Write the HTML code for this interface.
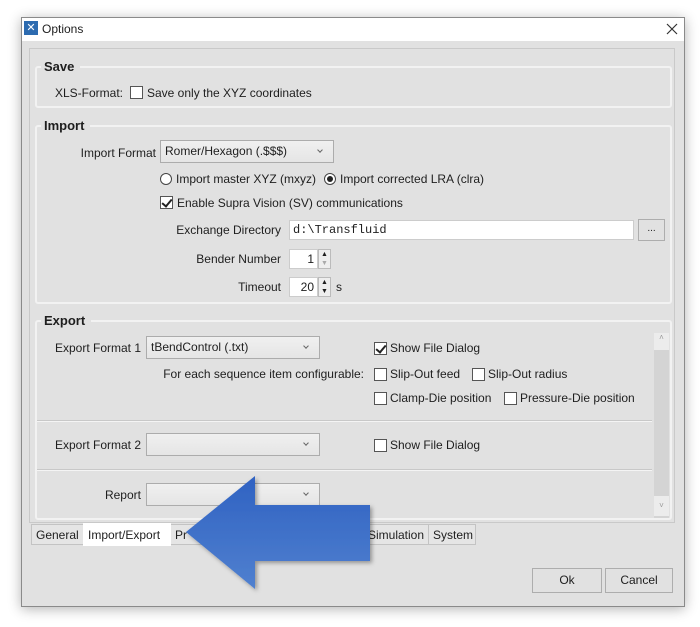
<!DOCTYPE html>
<html><head><meta charset="utf-8"><style>
*{box-sizing:border-box}
body{margin:0;width:700px;height:627px;background:#fff;position:relative;overflow:hidden;font-family:"Liberation Sans",sans-serif;font-size:12px;color:#1e1e1e}
.a{position:absolute;white-space:nowrap}
.dlg{position:absolute;left:21px;top:17px;width:664px;height:590px;background:#e1e1e1;border:1px solid #8a8a8a;box-shadow:0 2px 12px rgba(0,0,0,.3)}
.grp{position:absolute;border:2px solid #f2f2f2;border-radius:3px}
.gt{position:absolute;font-weight:bold;font-size:13px;background:#e1e1e1;padding:0 6px 0 3px}
.cb{position:absolute;width:13px;height:13px;border:1px solid #555;background:#fff}
.cb.c::after{content:"";position:absolute;left:3px;top:0px;width:4px;height:8px;border:solid #222;border-width:0 2px 2px 0;transform:rotate(40deg)}
.combo{position:absolute;border:1px solid #acacac;background:linear-gradient(#f0f0f0,#e5e5e5);padding:3px 4px;height:23px}
.combo::after{content:"";position:absolute;right:11px;top:7px;width:3px;height:3px;border:solid #666;border-width:0 1px 1px 0;transform:rotate(45deg)}
.rd{position:absolute;width:12px;height:12px;border:1px solid #444;border-radius:50%;background:#fff}
.rd.c::after{content:"";position:absolute;left:2px;top:2px;width:6px;height:6px;border-radius:50%;background:#222}
.tb{position:absolute;background:#fff;border:1px solid #ccc}
.btn{position:absolute;border:1px solid #adadad;background:#e1e1e1;text-align:center}
.tab{position:absolute;top:524px;height:21px;border:1px solid #c3c3c3;background:#e5e5e5;padding:3px 4px}
.r{text-align:right}
</style></head><body>
<div class="dlg"></div>
<div class="a" style="left:22px;top:18px;width:662px;height:23px;background:#fff"></div>
<div class="a" style="left:24px;top:21px;width:14px;height:14px;background:#2d6bb0;color:#fff;font-size:11px;line-height:14px;text-align:center">✕</div>
<div class="a" style="left:42px;top:22px">Options</div>
<svg class="a" style="left:666px;top:23px" width="12" height="12"><path d="M1 1L11 11M11 1L1 11" stroke="#333" stroke-width="1.2"/></svg>
<div class="a" style="left:29px;top:48px;width:646px;height:475px;border:1px solid #c9c9c9"></div>

<div class="grp" style="left:35px;top:66px;width:637px;height:42px"></div>
<div class="gt" style="left:41px;top:59px">Save</div>
<div class="a" style="left:55px;top:86px">XLS-Format:</div>
<div class="cb" style="left:130px;top:86px"></div>
<div class="a" style="left:147px;top:86px">Save only the XYZ coordinates</div>

<div class="grp" style="left:35px;top:125px;width:637px;height:179px"></div>
<div class="gt" style="left:41px;top:118px">Import</div>
<div class="a r" style="left:60px;width:96px;top:146px">Import Format</div>
<div class="combo" style="left:160px;top:140px;width:174px">Romer/Hexagon (.$$$)</div>
<div class="rd" style="left:160px;top:173px"></div>
<div class="a" style="left:176px;top:172px">Import master XYZ (mxyz)</div>
<div class="rd c" style="left:324px;top:173px"></div>
<div class="a" style="left:340px;top:172px">Import corrected LRA (clra)</div>
<div class="cb c" style="left:160px;top:196px"></div>
<div class="a" style="left:177px;top:196px">Enable Supra Vision (SV) communications</div>
<div class="a r" style="left:150px;width:131px;top:223px">Exchange Directory</div>
<div class="tb" style="left:289px;top:220px;width:345px;height:20px;font-family:'Liberation Mono',monospace;padding:2px 3px">d:\Transfluid</div>
<div class="btn" style="left:638px;top:219px;width:27px;height:22px;font-size:10px;line-height:18px">...</div>
<div class="a r" style="left:150px;width:131px;top:252px">Bender Number</div>
<div class="tb" style="left:289px;top:249px;width:29px;height:20px;text-align:right;padding:2px 3px">1</div>
<div class="a" style="left:318px;top:249px;width:13px;height:20px;border:1px solid #bbb;background:#eee;font-size:7px;line-height:9px;text-align:center">▲<br><span style="color:#aaa">▼</span></div>
<div class="a r" style="left:150px;width:131px;top:280px">Timeout</div>
<div class="tb" style="left:289px;top:277px;width:29px;height:20px;text-align:right;padding:2px 3px">20</div>
<div class="a" style="left:318px;top:277px;width:13px;height:20px;border:1px solid #bbb;background:#eee;font-size:7px;line-height:9px;text-align:center">▲<br>▼</div>
<div class="a" style="left:336px;top:280px">s</div>

<div class="grp" style="left:35px;top:320px;width:637px;height:200px"></div>
<div class="gt" style="left:41px;top:313px">Export</div>
<div class="a" style="left:654px;top:333px;width:15px;height:185px;background:#d4d4d4"></div>
<div class="a" style="left:654px;top:333px;width:15px;height:17px;background:#ececec;font-size:8px;text-align:center;color:#999">˄</div>
<div class="a" style="left:654px;top:496px;width:15px;height:20px;background:#ececec;font-size:8px;text-align:center;color:#999;padding-top:5px">˅</div>
<div class="a r" style="left:40px;width:101px;top:341px">Export Format 1</div>
<div class="combo" style="left:146px;top:336px;width:174px">tBendControl (.txt)</div>
<div class="cb c" style="left:374px;top:342px"></div>
<div class="a" style="left:390px;top:341px">Show File Dialog</div>
<div class="a r" style="left:140px;width:224px;top:367px">For each sequence item configurable:</div>
<div class="cb" style="left:374px;top:368px"></div>
<div class="a" style="left:390px;top:367px">Slip-Out feed</div>
<div class="cb" style="left:472px;top:368px"></div>
<div class="a" style="left:488px;top:367px">Slip-Out radius</div>
<div class="cb" style="left:374px;top:392px"></div>
<div class="a" style="left:390px;top:391px">Clamp-Die position</div>
<div class="cb" style="left:504px;top:392px"></div>
<div class="a" style="left:520px;top:391px">Pressure-Die position</div>
<div class="a" style="left:37px;top:420px;width:615px;height:2px;background:#c8c8c8;border-bottom:1px solid #f4f4f4"></div>
<div class="a r" style="left:40px;width:101px;top:438px">Export Format 2</div>
<div class="combo" style="left:146px;top:433px;width:174px"></div>
<div class="cb" style="left:374px;top:439px"></div>
<div class="a" style="left:390px;top:438px">Show File Dialog</div>
<div class="a" style="left:37px;top:469px;width:615px;height:2px;background:#c8c8c8;border-bottom:1px solid #f4f4f4"></div>
<div class="a r" style="left:40px;width:101px;top:488px">Report</div>
<div class="combo" style="left:146px;top:483px;width:174px"></div>

<div class="tab" style="left:31px;width:53px">General</div>
<div class="tab" style="left:170px;width:194px">Pr</div>
<div class="tab" style="left:363px;width:66px">Simulation</div>
<div class="tab" style="left:428px;width:48px">System</div>
<div class="tab" style="left:83px;width:88px;background:#fff;border-color:#fff;top:523px;height:23px;padding-top:4px">Import/Export</div>

<div class="btn" style="left:532px;top:568px;width:70px;height:25px;line-height:23px">Ok</div>
<div class="btn" style="left:605px;top:568px;width:68px;height:25px;line-height:23px">Cancel</div>

<svg class="a" style="left:0;top:0" width="700" height="627">
<defs><linearGradient id="g" x1="0" y1="0" x2="0" y2="1"><stop offset="0" stop-color="#2f62c2"/><stop offset="1" stop-color="#5080cf"/></linearGradient>
<filter id="s"><feDropShadow dx="2" dy="2" stdDeviation="2" flood-opacity=".35"/></filter></defs>
<polygon points="186,532 255,476 255,505 370,505 370,561 255,561 255,589" fill="url(#g)" filter="url(#s)"/>
</svg>
</body></html>
